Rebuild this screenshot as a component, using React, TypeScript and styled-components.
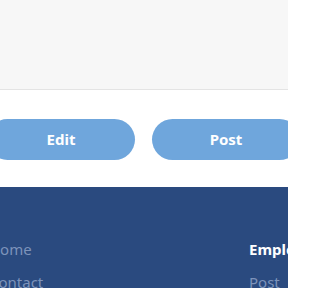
import React from 'react'
import styled, { createGlobalStyle } from 'styled-components'

const GlobalStyle = createGlobalStyle`
    html, body {
        margin: 0;
        padding: 0;
        background: #ffffff;
        font-family: 'Noto Sans', 'Open Sans', sans-serif;
        overflow: hidden;
    }
`

const Page = styled.div`
    width: 288px;
    height: 288px;
    display: flex;
    flex-direction: column;
    overflow: hidden;
`

const Preview = styled.div`
    height: 89px;
    flex-shrink: 0;
    background-color: #f7f7f7;
    border-bottom: 1px solid #e4e4e4;
`

const Actions = styled.div`
    height: 96px;
    flex-shrink: 0;
    display: flex;
    align-items: center;
    gap: 17px;
    margin-left: -13px;
    padding-top: 1px;
`

const ActionButton = styled.button`
    width: 148px;
    height: 41px;
    flex-shrink: 0;
    border: none;
    border-radius: 21px;
    background-color: #6fa6dc;
    color: #ffffff;
    font-family: 'Noto Sans', 'Open Sans', sans-serif;
    font-weight: 700;
    font-size: 15px;
    cursor: pointer;
`

const Footer = styled.footer`
    flex: 1;
    background-color: #2a4a7f;
    display: flex;
    padding-top: 52px;
    margin-left: -11px;
`

const FooterColumn = styled.div<{ $width: number }>`
    width: ${props => props.$width}px;
    flex-shrink: 0;
    display: flex;
    flex-direction: column;
    gap: 12px;
`

const FooterLink = styled.div<{ $heading?: boolean }>`
    font-size: 15px;
    line-height: 21px;
    white-space: nowrap;
    font-weight: ${props => (props.$heading ? 700 : 400)};
    color: ${props => (props.$heading ? '#ffffff' : '#7d93ba')};
`

const App: React.FC = () => {
    const columns = [
        { width: 260, items: [{ label: 'Home' }, { label: 'Contact' }] },
        { width: 140, items: [{ label: 'Employers', heading: true }, { label: 'Post' }] },
    ]

    return (
        <Page>
            <GlobalStyle />
            <Preview />
            <Actions>
                <ActionButton>{'Edit'}</ActionButton>
                <ActionButton>{'Post'}</ActionButton>
            </Actions>
            <Footer>
                {columns.map((col, i) => (
                    <FooterColumn key={i} $width={col.width}>
                        {col.items.map((x, j) => (
                            <FooterLink key={j} $heading={x.heading}>
                                {x.label}
                            </FooterLink>
                        ))}
                    </FooterColumn>
                ))}
            </Footer>
        </Page>
    )
}

export default App
